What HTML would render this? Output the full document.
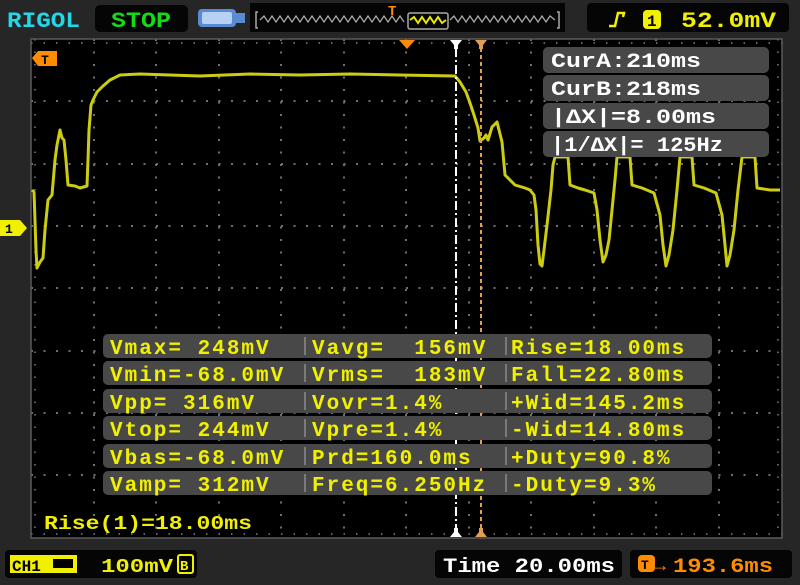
<!DOCTYPE html>
<html><head><meta charset="utf-8"><style>
html,body{margin:0;padding:0;background:#262626;}
svg{display:block;}
text{font-family:"Liberation Mono","DejaVu Sans Mono",monospace;font-weight:bold;white-space:pre;}
</style></head><body>
<svg width="800" height="585" viewBox="0 0 800 585" xmlns="http://www.w3.org/2000/svg">
<rect width="800" height="585" fill="#262626"/>
<!-- header -->
<text x="7" y="27" font-size="22" fill="#22d8e8" textLength="73" lengthAdjust="spacingAndGlyphs">RIGOL</text>
<rect x="95" y="5" width="93" height="27" rx="5" fill="#050505"/>
<text x="111" y="27" font-size="22" fill="#12dd12" textLength="60" lengthAdjust="spacingAndGlyphs">STOP</text>
<rect x="198" y="9" width="38" height="18" rx="4" fill="#5a8ad0" />
<rect x="202" y="12" width="30" height="12" rx="2" fill="#b8d0f4"/>
<rect x="236" y="13" width="9" height="10" fill="#5a8ad0"/>
<rect x="250" y="3" width="315" height="29" fill="#050505"/>
<path d="M258 12 h-2 v16 h2 M557 12 h2 v16 h-2" stroke="#aaa" stroke-width="1.5" fill="none"/>
<polyline points="260,20 264,16 268,22 272,16 276,22 280,16 284,22 288,16 292,22 296,16 300,22 304,16 308,22 312,16 316,22 320,16 324,22 328,16 332,22 336,16 340,22 344,16 348,22 352,16 356,22 360,16 364,22 368,16 372,22 376,16 380,22 384,16 388,22 392,16 396,22 400,16 404,22" stroke="#aaa" stroke-width="1.3" fill="none"/>
<polyline points="450,20 454,16 458,22 462,16 466,22 470,16 474,22 478,16 482,22 486,16 490,22 494,16 498,22 502,16 506,22 510,16 514,22 518,16 522,22 526,16 530,22 534,16 538,22 542,16 546,22 550,16 555,20" stroke="#aaa" stroke-width="1.3" fill="none"/>
<rect x="408" y="13" width="40" height="16" rx="2" fill="none" stroke="#aaa" stroke-width="1.5"/>
<polyline points="410,20 414,17 418,23 422,17 426,23 430,17 434,23 438,17 442,23 446,20" stroke="#e8e800" stroke-width="2" fill="none"/>
<text x="388" y="15" font-size="14" fill="#ff8c00">T</text>
<rect x="587" y="3" width="202" height="29" rx="4" fill="#050505"/>
<path d="M609 26 h6 l3 -13 h6 l-1 4" stroke="#f0f000" stroke-width="2.5" fill="none"/>
<rect x="643" y="10" width="18" height="19" rx="4" fill="#f0f000"/>
<text x="647" y="26" font-size="16" fill="#000">1</text>
<text x="681" y="27" font-size="22" fill="#f0f000" textLength="95" lengthAdjust="spacingAndGlyphs">52.0mV</text>
<!-- grid -->
<rect x="31" y="39" width="751" height="499" fill="#000"/>
<g stroke="#707070" stroke-width="2" stroke-dasharray="2,10.5">
<line x1="31" y1="101" x2="782" y2="101"/>
<line x1="31" y1="164" x2="782" y2="164"/>
<line x1="31" y1="226" x2="782" y2="226"/>
<line x1="31" y1="288" x2="782" y2="288"/>
<line x1="31" y1="351" x2="782" y2="351"/>
<line x1="31" y1="413" x2="782" y2="413"/>
<line x1="31" y1="475" x2="782" y2="475"/>
<line x1="94" y1="39" x2="94" y2="538"/>
<line x1="156" y1="39" x2="156" y2="538"/>
<line x1="219" y1="39" x2="219" y2="538"/>
<line x1="281" y1="39" x2="281" y2="538"/>
<line x1="344" y1="39" x2="344" y2="538"/>
<line x1="406" y1="39" x2="406" y2="538"/>
<line x1="469" y1="39" x2="469" y2="538"/>
<line x1="531" y1="39" x2="531" y2="538"/>
<line x1="594" y1="39" x2="594" y2="538"/>
<line x1="656" y1="39" x2="656" y2="538"/>
<line x1="719" y1="39" x2="719" y2="538"/>
</g>
<g stroke="#808080" stroke-width="1.5" stroke-dasharray="1.5,11">
<line x1="31" y1="43" x2="782" y2="43"/>
<line x1="31" y1="534" x2="782" y2="534"/>
<line x1="35" y1="39" x2="35" y2="538"/>
<line x1="778" y1="39" x2="778" y2="538"/>
</g>
<rect x="31" y="39" width="751" height="499" fill="none" stroke="#5a5a5a" stroke-width="1.5"/>
<!-- waveform -->
<polyline fill="none" stroke="#cccc10" stroke-width="3" stroke-linejoin="round" points="32,190 34,192 36,250 37,268 40,262 43,258 45,230 48,200 52,195 55,160 57,145 60,130 62,138 64,140 66,160 68,185 75,186 80,188 87,186 88,160 89,130 91,105 93,100 97,92 103,86 110,80 120,75 140,74 200,76 250,74 300,75 350,74 400,75 455,76 460,82 466,92 470,103 474,115 478,128 480,141 484,138 486,135 488,140 492,127 497,122 499,130 502,142 505,175 510,180 515,185 525,188 530,190 534,195 536,210 538,245 540,264 542,266 544,250 547,225 551,190 553,165 555,157 568,157 570,185 578,188 585,190 594,193 597,210 600,240 603,262 606,255 609,240 612,210 615,180 617,157 630,157 632,185 642,188 654,193 660,215 663,245 666,266 669,255 673,230 677,190 680,157 692,157 694,185 704,188 716,193 722,215 725,245 727,266 730,255 734,230 738,190 742,157 755,157 757,188 770,190 780,190"/>
<!-- cursors -->
<line x1="456" y1="48" x2="456" y2="535" stroke="#fff" stroke-width="2" stroke-dasharray="9,3,2,3"/>
<line x1="481" y1="48" x2="481" y2="535" stroke="#e0a050" stroke-width="2" stroke-dasharray="4,3"/>
<path d="M399 40 h16 l-8 9 z" fill="#ff8c00"/>
<path d="M450 40 h12 l-4 5 v4 h-4 v-4 z" fill="#fff"/>
<path d="M475 40 h12 l-4 5 v4 h-4 v-4 z" fill="#e0a050"/>
<path d="M450 537 h12 l-4 -5 v-4 h-4 v4 z" fill="#fff"/>
<path d="M475 537 h12 l-4 -5 v-4 h-4 v4 z" fill="#e0a050"/>
<!-- markers -->
<path d="M32 58 l6 -7 h19 v15 h-19 z" fill="#ff8c00"/>
<text x="41" y="64" font-size="13" fill="#000">T</text>
<path d="M0 220 h20 l7 8 l-7 8 h-20 z" fill="#f0f000"/>
<text x="5" y="233" font-size="13" fill="#000">1</text>
<!-- cursor box -->
<g font-size="20" fill="#fff">
<rect x="543" y="47" width="226" height="26" rx="5" fill="#484848"/>
<rect x="543" y="75" width="226" height="26" rx="5" fill="#484848"/>
<rect x="543" y="103" width="226" height="26" rx="5" fill="#484848"/>
<rect x="543" y="131" width="226" height="26" rx="5" fill="#484848"/>
<text x="551" y="67" textLength="150" lengthAdjust="spacingAndGlyphs">CurA:210ms</text>
<text x="551" y="95" textLength="150" lengthAdjust="spacingAndGlyphs">CurB:218ms</text>
<text x="551" y="123" textLength="165" lengthAdjust="spacingAndGlyphs">|ΔX|=8.00ms</text>
<text x="551" y="151" textLength="172" lengthAdjust="spacingAndGlyphs">|1/ΔX|= 125Hz</text>
</g>
<!-- measurements -->
<g fill="#484848">
<rect x="103" y="334" width="609" height="24" rx="5"/>
<rect x="103" y="361" width="609" height="24" rx="5"/>
<rect x="103" y="389" width="609" height="24" rx="5"/>
<rect x="103" y="416" width="609" height="24" rx="5"/>
<rect x="103" y="444" width="609" height="24" rx="5"/>
<rect x="103" y="471" width="609" height="24" rx="5"/>
</g>
<g stroke="#8a8a8a" stroke-width="1.5">
<line x1="305" y1="337" x2="305" y2="355"/><line x1="506" y1="337" x2="506" y2="355"/>
<line x1="305" y1="364" x2="305" y2="382"/><line x1="506" y1="364" x2="506" y2="382"/>
<line x1="305" y1="392" x2="305" y2="410"/><line x1="506" y1="392" x2="506" y2="410"/>
<line x1="305" y1="419" x2="305" y2="437"/><line x1="506" y1="419" x2="506" y2="437"/>
<line x1="305" y1="447" x2="305" y2="465"/><line x1="506" y1="447" x2="506" y2="465"/>
<line x1="305" y1="474" x2="305" y2="492"/><line x1="506" y1="474" x2="506" y2="492"/>
</g>
<g font-size="21" fill="#f0f000" style="letter-spacing:2px">
<text x="110" y="354">Vmax= 248mV</text>
<text x="110" y="381">Vmin=-68.0mV</text>
<text x="110" y="409">Vpp= 316mV</text>
<text x="110" y="436">Vtop= 244mV</text>
<text x="110" y="464">Vbas=-68.0mV</text>
<text x="110" y="491">Vamp= 312mV</text>
<text x="312" y="354">Vavg=  156mV</text>
<text x="312" y="381">Vrms=  183mV</text>
<text x="312" y="409">Vovr=1.4%</text>
<text x="312" y="436">Vpre=1.4%</text>
<text x="312" y="464">Prd=160.0ms</text>
<text x="312" y="491">Freq=6.250Hz</text>
<text x="511" y="354">Rise=18.00ms</text>
<text x="511" y="381">Fall=22.80ms</text>
<text x="511" y="409">+Wid=145.2ms</text>
<text x="511" y="436">-Wid=14.80ms</text>
<text x="511" y="464">+Duty=90.8%</text>
<text x="511" y="491">-Duty=9.3%</text>
</g>
<text x="44" y="529" font-size="19" fill="#f0f000" textLength="208" lengthAdjust="spacingAndGlyphs">Rise(1)=18.00ms</text>
<!-- footer -->
<rect x="5" y="550" width="192" height="28" rx="4" fill="#050505"/>
<rect x="10" y="555" width="67" height="18" fill="#f0f000"/>
<text x="12" y="571" font-size="16" fill="#000">CH1</text>
<rect x="53" y="559" width="20" height="9" fill="#000"/>
<text x="101" y="572" font-size="19" fill="#f0f000" textLength="72" lengthAdjust="spacingAndGlyphs">100mV</text>
<rect x="178" y="555" width="15" height="18" rx="2" fill="none" stroke="#f0f000" stroke-width="2"/>
<text x="180" y="570" font-size="14" fill="#f0f000">B</text>
<rect x="435" y="550" width="187" height="28" rx="4" fill="#050505"/>
<text x="443" y="572" font-size="20" fill="#fff" textLength="172" lengthAdjust="spacingAndGlyphs">Time 20.00ms</text>
<rect x="630" y="550" width="162" height="28" rx="4" fill="#050505"/>
<rect x="638" y="555" width="17" height="17" rx="4" fill="#ff8c00"/>
<text x="641" y="569" font-size="13" fill="#000">T</text>
<text x="655" y="571" font-size="18" fill="#ff8c00">→</text>
<text x="673" y="572" font-size="20" fill="#ff8c00" textLength="100" lengthAdjust="spacingAndGlyphs">193.6ms</text>
</svg>
</body></html>
